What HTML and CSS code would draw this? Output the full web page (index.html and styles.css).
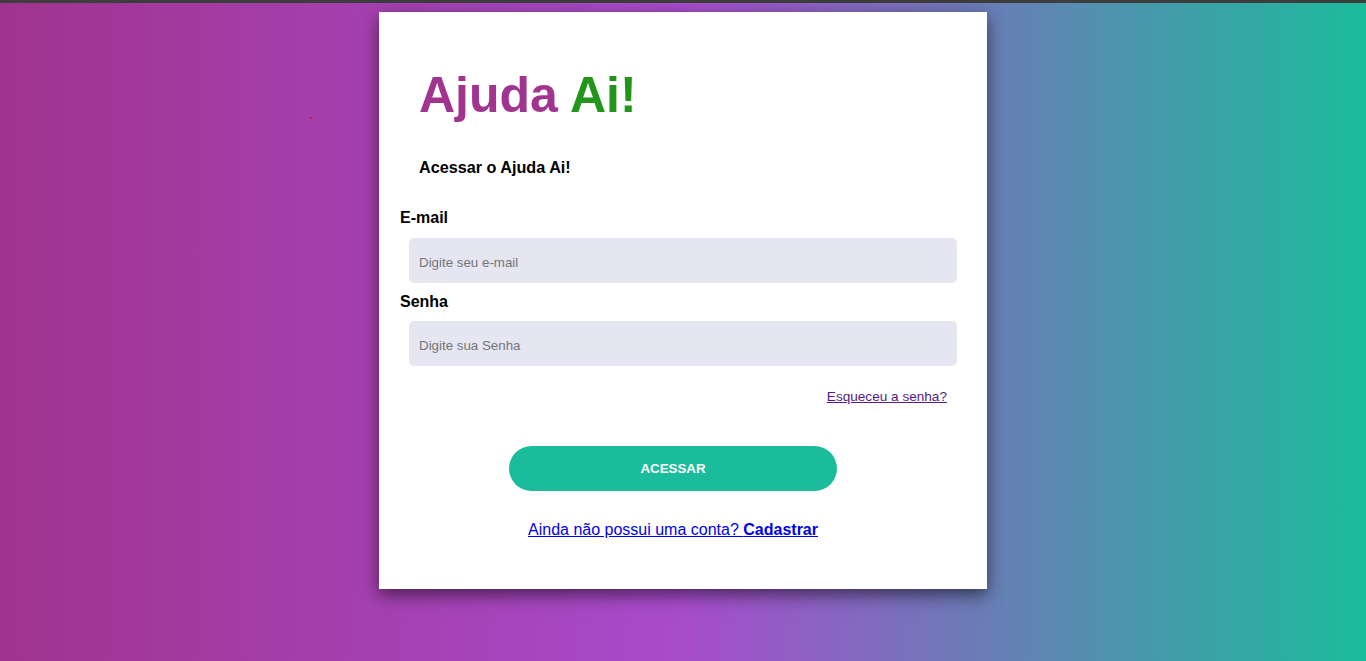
FILE: index.html
```html
<!DOCTYPE html>
<html lang="pt-BR">
<head>
<meta charset="utf-8">
<title>Ajuda Ai! - Login</title>
<link rel="stylesheet" href="styles.css">
</head>
<body>
<div class="topbar"></div>
<span class="dot"></span>
<main class="page">
  <section class="card">
    <h1 class="brand"><span class="brand-a">Ajuda</span> <span class="brand-b">Ai!</span></h1>
    <h2 class="subtitle">Acessar o Ajuda Ai!</h2>
    <form class="form" onsubmit="return false">
      <label class="label" for="email">E-mail</label>
      <input class="input" id="email" type="email" placeholder="Digite seu e-mail">
      <label class="label label-senha" for="senha">Senha</label>
      <input class="input input-senha" id="senha" type="password" placeholder="Digite sua Senha">
      <div class="forgot-row"><a class="forgot" href="#">Esqueceu a senha?</a></div>
      <div class="btn-row"><button class="btn" type="submit">ACESSAR</button></div>
      <div class="signup-row"><a class="signup" href="#signup">Ainda não possui uma conta? <strong>Cadastrar</strong></a></div>
    </form>
  </section>
</main>
</body>
</html>
```

FILE: styles.css
```css
* { box-sizing: border-box; }
html, body { height: 100%; }
body {
  margin: 0;
  font-family: "Liberation Sans", Arial, sans-serif;
  background: linear-gradient(90deg, #a0338e 0%, #a84ccc 50%, #1abc9c 100%);
  overflow: hidden;
}
.topbar {
  height: 3px;
  background: #3d3d3d;
}
.dot {
  position: absolute;
  left: 310px;
  top: 117px;
  width: 2px;
  height: 2px;
  background: #e0103a;
}
.page {
  display: flex;
  justify-content: center;
  padding-top: 9px;
}
.card {
  width: 608px;
  height: 577px;
  background: #fff;
  box-shadow: 0 6px 16px rgba(0, 0, 0, 0.55);
  padding: 55px 40px 0 20px;
}
.brand {
  margin: 0 0 0 20px;
  font-size: 50px;
  line-height: 56px;
  font-weight: 700;
}
.brand-a { color: #a1348f; }
.brand-b { color: #22961b; }
.subtitle {
  margin: 35px 0 0 20px;
  font-size: 16.2px;
  line-height: 18px;
  font-weight: 700;
  color: #000;
}
.form {
  display: flex;
  flex-direction: column;
  margin-top: 33px;
}
.label {
  font-size: 16px;
  line-height: 18px;
  font-weight: 700;
  color: #000;
  margin-left: 1px;
}
.label-senha { margin-top: 10px; }
.input {
  margin: 11px 0 0 10px;
  width: 548px;
  height: 45px;
  border: none;
  border-radius: 5px;
  background: #e6e6f2;
  padding: 3px 10px 0;
  font-family: "Liberation Sans", Arial, sans-serif;
  font-size: 13.333px;
  color: #333;
  outline: none;
}
.input-senha { margin-top: 10px; }
.input::placeholder { color: #757575; }
.forgot-row {
  display: flex;
  justify-content: flex-end;
  margin-top: 23px;
  line-height: 16px;
}
.forgot {
  font-size: 13.6px;
  color: #551a8b;
  text-decoration: underline;
}
.btn-row {
  display: flex;
  justify-content: center;
  margin-top: 40.5px;
}
.btn {
  width: 328px;
  height: 45px;
  border: none;
  border-radius: 23px;
  background: #1abc9c;
  color: #fff;
  font-family: "Liberation Sans", Arial, sans-serif;
  font-size: 13.333px;
  font-weight: 700;
  cursor: pointer;
}
.signup-row {
  display: flex;
  justify-content: center;
  margin-top: 30.5px;
  line-height: 18px;
}
.signup {
  font-size: 16px;
  color: #0000ee;
  text-decoration: underline;
}
.signup strong { font-weight: 700; }
```
